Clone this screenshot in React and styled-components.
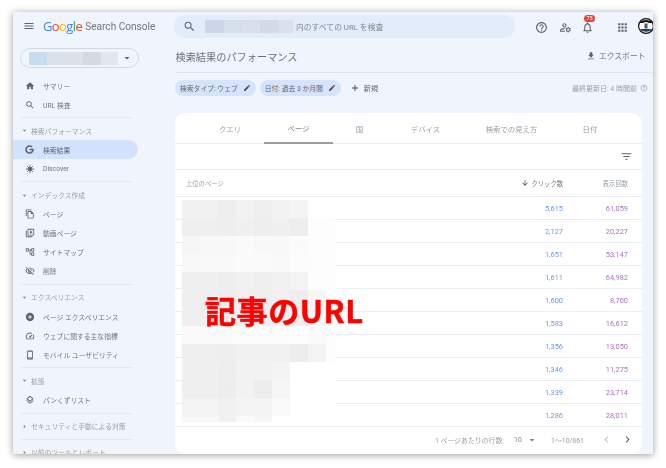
import React from "react";
import styled, { createGlobalStyle } from "styled-components";
import {
  MdMenu,
  MdSearch,
  MdHelpOutline,
  MdOutlineManageAccounts,
  MdOutlineNotifications,
  MdApps,
  MdFileDownload,
  MdEdit,
  MdAdd,
  MdFilterList,
  MdArrowDownward,
  MdChevronLeft,
  MdChevronRight,
  MdArrowDropDown,
  MdArrowRight,
  MdHome,
  MdOutlineFileCopy,
  MdOutlineVideoLibrary,
  MdOutlineAccountTree,
  MdOutlineVisibilityOff,
  MdAddCircle,
  MdOutlineSpeed,
  MdOutlinePhoneAndroid,
  MdOutlineLayers,
} from "react-icons/md";
import { FaGoogle } from "react-icons/fa";

const FONT = `Roboto, "Noto Sans CJK JP", sans-serif`;

const DiscoverIcon = () => (
  <svg viewBox="0 0 24 24" fill="none" stroke="currentColor" strokeWidth="2.2">
    <circle cx="12" cy="12" r="5" fill="currentColor" stroke="none" />
    <path d="M12 2v20M2 12h20M5 5l14 14M19 5L5 19" />
  </svg>
);

const sections = [
  {
    items: [
      { icon: <MdHome />, label: "サマリー" },
      { icon: <MdSearch />, label: "URL 検査" },
    ],
  },
  {
    title: "検索パフォーマンス",
    items: [
      { icon: <FaGoogle />, label: "検索結果", active: true },
      { icon: <DiscoverIcon />, label: "Discover" },
    ],
  },
  {
    title: "インデックス作成",
    items: [
      { icon: <MdOutlineFileCopy />, label: "ページ" },
      { icon: <MdOutlineVideoLibrary />, label: "動画ページ" },
      { icon: <MdOutlineAccountTree />, label: "サイトマップ" },
      { icon: <MdOutlineVisibilityOff />, label: "削除" },
    ],
  },
  {
    title: "エクスペリエンス",
    items: [
      { icon: <MdAddCircle />, label: "ページ エクスペリエンス" },
      { icon: <MdOutlineSpeed />, label: "ウェブに関する主な指標" },
      { icon: <MdOutlinePhoneAndroid />, label: "モバイル ユーザビリティ" },
    ],
  },
  {
    title: "拡張",
    items: [{ icon: <MdOutlineLayers />, label: "パンくずリスト" }],
  },
  { title: "セキュリティと手動による対策", closed: true, items: [] },
  { title: "以前のツールとレポート", closed: true, items: [] },
];

const tabs = ["クエリ", "ページ", "国", "デバイス", "検索での見え方", "日付"];
const tabWidths = [68, 69, 53, 79, 93, 64];

const rows = [
  ["5,615", "61,059"],
  ["2,127", "20,227"],
  ["1,651", "53,147"],
  ["1,611", "64,982"],
  ["1,600", "8,700"],
  ["1,583", "16,612"],
  ["1,356", "13,050"],
  ["1,346", "11,275"],
  ["1,339", "23,714"],
  ["1,286", "28,011"],
];

// redacted urls, one row of grey levels per 18px of height
const mosaic = [
  ["f1", "f1", "ee", "f2", "ef", "f2", "f4", "ff", "ff"],
  ["ef", "ef", "ee", "f0", "ee", "f0", "ee", "fd", "fd"],
  ["f6", "f8", "f8", "fa", "f8", "f8", "fb", "fd", "fd"],
  ["f8", "f9", "f9", "fb", "fa", "f9", "fc", "fd", "fd"],
  ["ef", "f0", "ee", "f1", "ef", "f1", "f3", "fd", "fd"],
  ["ef", "ef", "ee", "f0", "ef", "f0", "ee", "f6", "fd"],
  ["ef", "ef", "ee", "f0", "ef", "f0", "ee", "f6", "fd"],
  ["fa", "fa", "fb", "fc", "fc", "fc", "fd", "fa", "fd"],
  ["ef", "ef", "ee", "f1", "f1", "f1", "ed", "f3", "fd"],
  ["f0", "f0", "ee", "f2", "f2", "f4", "ff", "ff", "ff"],
  ["ef", "ef", "ed", "f2", "ed", "f6", "ff", "ff", "ff"],
  ["f3", "f3", "f1", "f4", "f4", "fa", "ff", "ff", "ff"],
  ["f8", "f8", "f1", "fa", "f6", "fe", "ff", "ff", "ff"],
];

const App = () => {
  return (
    <>
      <GlobalStyle />
      <Page>
        <Window>
          <TopBar>
            <Brand>
              <MenuButton>
                <MdMenu />
              </MenuButton>
              <Logo>
                <Letter $c="#4285f4">G</Letter>
                <Letter $c="#ea4335">o</Letter>
                <Letter $c="#fbbc05">o</Letter>
                <Letter $c="#4285f4">g</Letter>
                <Letter $c="#34a853">l</Letter>
                <Letter $c="#ea4335">e</Letter>
              </Logo>
              <Product>Search Console</Product>
            </Brand>
            <SearchBar>
              <SearchIcon>
                <MdSearch />
              </SearchIcon>
              <Redacted $w={88} $h={13}>
                <Swatch $c="#ccd6e6" $w={19} />
                <Swatch $c="#d6deea" $w={18} />
                <Swatch $c="#d9e0ec" $w={18} />
                <Swatch $c="#d3dbe8" $w={19} />
                <Swatch $c="#dbe2ee" $w={14} />
              </Redacted>
              <SearchText>内のすべての URL を検査</SearchText>
            </SearchBar>
            <TopIcons>
              <TopIcon $left={1}>
                <MdHelpOutline />
              </TopIcon>
              <TopIcon $left={25}>
                <MdOutlineManageAccounts />
              </TopIcon>
              <TopIcon $left={47}>
                <MdOutlineNotifications />
                <Badge>75</Badge>
              </TopIcon>
              <TopIcon $left={82}>
                <MdApps />
              </TopIcon>
              <Avatar viewBox="0 0 16 16">
                <circle cx="8" cy="8" r="7.4" fill="#fff" stroke="#111" strokeWidth="1.2" />
                <path d="M1.5 5 C4 1 12 1 14.5 5 L11 5 C9 3.5 7 3.5 5 5 Z" fill="#111" />
                <path d="M2 11 H14 C12.5 14.5 3.5 14.5 2 11 Z" fill="#17445f" />
                <rect x="6.5" y="5.5" width="3" height="5" fill="#555" />
              </Avatar>
            </TopIcons>
          </TopBar>

          <Body>
            <Sidebar>
              <PropertyPicker>
                <Redacted $w={89} $h={13}>
                  <Swatch $c="#c9dcef" $w={18} />
                  <Swatch $c="#dbe1ea" $w={18} />
                  <Swatch $c="#dde2ea" $w={18} />
                  <Swatch $c="#d5d9e1" $w={18} />
                  <Swatch $c="#e2e6ee" $w={17} />
                </Redacted>
                <PickerCaret>
                  <MdArrowDropDown />
                </PickerCaret>
              </PropertyPicker>

              {sections.map((section, i) => (
                <Section key={i} $first={i === 0}>
                  {section.title && (
                    <SectionTitle>
                      <Caret>{section.closed ? <MdArrowRight /> : <MdArrowDropDown />}</Caret>
                      {section.title}
                    </SectionTitle>
                  )}
                  {section.items.map((item) => (
                    <NavItem key={item.label} $active={item.active}>
                      <NavIcon $small={item.active}>{item.icon}</NavIcon>
                      <span>{item.label}</span>
                    </NavItem>
                  ))}
                </Section>
              ))}
            </Sidebar>

            <Main>
              <TitleRow>
                <Title>検索結果のパフォーマンス</Title>
                <ExportButton>
                  <MdFileDownload />
                  エクスポート
                </ExportButton>
              </TitleRow>

              <FilterRow>
                <Chip>
                  検索タイプ: ウェブ
                  <MdEdit />
                </Chip>
                <Chip>
                  日付: 過去 3 か月間
                  <MdEdit />
                </Chip>
                <NewButton>
                  <MdAdd />
                  新規
                </NewButton>
                <Updated>
                  最終更新日: 4 時間前
                  <MdHelpOutline />
                </Updated>
              </FilterRow>

              <Card>
                <Tabs>
                  {tabs.map((tab, i) => (
                    <Tab key={tab} $active={i === 1} $w={tabWidths[i]}>
                      {tab}
                    </Tab>
                  ))}
                </Tabs>
                <Tools>
                  <MdFilterList />
                </Tools>
                <TableHead>
                  <HeadLabel>上位のページ</HeadLabel>
                  <ClickHead>
                    <MdArrowDownward />
                    クリック数
                  </ClickHead>
                  <ImprCell $head>表示回数</ImprCell>
                </TableHead>
                {rows.map((row, i) => (
                  <Row key={i}>
                    <ClickCell>{row[0]}</ClickCell>
                    <ImprCell>{row[1]}</ImprCell>
                  </Row>
                ))}
                <Footer>
                  <span>1 ページあたりの行数:</span>
                  <PerPage>
                    10
                    <MdArrowDropDown />
                  </PerPage>
                  <span>1〜10/861</span>
                  <Pager>
                    <MdChevronLeft />
                    <MdChevronRight />
                  </Pager>
                </Footer>

                <Mosaic>
                  {mosaic.flat().map((c, i) => (
                    <Cell key={i} $c={`#${c}${c}${c}`} />
                  ))}
                </Mosaic>
                <Note>記事のURL</Note>
              </Card>
            </Main>
          </Body>
        </Window>
      </Page>
    </>
  );
};

export default App;

const GlobalStyle = createGlobalStyle`
  html, body {
    margin: 0;
    padding: 0;
    background: #ffffff;
  }
  * {
    box-sizing: border-box;
  }
`;

const Page = styled.div`
  width: 666px;
  height: 468px;
  padding: 12px 13px 14px;
  overflow: hidden;
  font-family: ${FONT};
  filter: blur(0.35px);
`;

const Window = styled.div`
  width: 640px;
  height: 442px;
  display: flex;
  flex-direction: column;
  overflow: hidden;
  background: #f0f4fc;
  box-shadow: 0 1px 7px rgba(0, 0, 0, 0.4);
`;

const TopBar = styled.div`
  height: 29px;
  flex: none;
  display: flex;
  align-items: flex-start;
  padding-top: 3px;
`;

const Brand = styled.div`
  width: 161px;
  flex: none;
  height: 22px;
  display: flex;
  align-items: center;
  padding-left: 10px;
`;

const MenuButton = styled.div`
  width: 12px;
  height: 12px;
  margin-right: 8px;
  color: #5f6368;
  display: flex;
  svg {
    width: 12px;
    height: 12px;
  }
`;

const Logo = styled.div`
  font-family: "Open Sans", sans-serif;
  font-size: 13px;
  letter-spacing: -0.6px;
  line-height: 22px;
`;

const Letter = styled.span`
  color: ${(p) => p.$c};
`;

const Product = styled.div`
  margin-left: 3px;
  font-size: 10.1px;
  color: #70757a;
  white-space: nowrap;
`;

const SearchBar = styled.div`
  width: 341px;
  flex: none;
  height: 23px;
  border-radius: 11px;
  background: #e3ecfb;
  display: flex;
  align-items: center;
  padding-left: 9px;
`;

const SearchIcon = styled.div`
  width: 13px;
  height: 13px;
  margin-right: 9px;
  color: #5f6368;
  display: flex;
  svg {
    width: 13px;
    height: 13px;
  }
`;

const Redacted = styled.div`
  width: ${(p) => p.$w}px;
  height: ${(p) => p.$h}px;
  display: flex;
  flex: none;
`;

const Swatch = styled.div`
  width: ${(p) => p.$w}px;
  background: ${(p) => p.$c};
`;

const SearchText = styled.div`
  margin-left: 3px;
  font-size: 7.8px;
  color: #80868b;
`;

const TopIcons = styled.div`
  position: relative;
  flex: 1;
  height: 24px;
`;

const TopIcon = styled.div`
  position: absolute;
  left: ${(p) => p.$left + 19}px;
  top: 4px;
  width: 13px;
  height: 13px;
  color: #5f6368;
  svg {
    width: 13px;
    height: 13px;
  }
`;

const Badge = styled.div`
  position: absolute;
  top: -4px;
  left: 3px;
  width: 11px;
  height: 7px;
  border-radius: 4px;
  background: #ea4335;
  color: #fff;
  font-size: 5.5px;
  line-height: 7px;
  text-align: center;
`;

const Avatar = styled.svg`
  position: absolute;
  right: -1px;
  top: 3px;
  width: 16px;
  height: 16px;
`;

const Body = styled.div`
  flex: 1;
  min-height: 0;
  display: flex;
`;

const Sidebar = styled.div`
  width: 162px;
  flex: none;
  overflow: hidden;
  padding-top: 7px;
`;

const PropertyPicker = styled.div`
  width: 119px;
  height: 20px;
  margin-left: 7px;
  border: 1px solid #d3d7de;
  border-radius: 10px;
  display: flex;
  align-items: center;
  padding-left: 8px;
`;

const PickerCaret = styled.div`
  margin-left: 3px;
  width: 12px;
  height: 12px;
  color: #5f6368;
  svg {
    display: block;
    width: 12px;
    height: 12px;
  }
`;

const Section = styled.div`
  width: 113px;
  padding: ${(p) => (p.$first ? "8px" : "3px")} 0 3px;
  border-bottom: 1px solid #e4e8f0;
  margin-left: 7px;
`;

const SectionTitle = styled.div`
  height: 19.1px;
  display: flex;
  align-items: center;
  font-size: 6.8px;
  color: #9aa0a6;
  white-space: nowrap;
`;

const Caret = styled.span`
  width: 9px;
  height: 9px;
  margin-left: 0;
  margin-right: 2px;
  display: flex;
  color: #80868b;
  svg {
    width: 9px;
    height: 9px;
  }
`;

const NavItem = styled.div`
  height: 19.1px;
  width: 125px;
  margin-left: -7px;
  padding-left: 11px;
  display: flex;
  align-items: center;
  font-size: 6.8px;
  color: #70757a;
  white-space: nowrap;
  background: ${(p) => (p.$active ? "#d3e3fd" : "transparent")};
  border-radius: 0 10px 10px 0;
  ${(p) => p.$active && "color: #5f6368;"}
`;

const NavIcon = styled.span`
  width: 11px;
  height: 11px;
  margin-right: 8px;
  display: flex;
  align-items: center;
  justify-content: center;
  color: #5f6368;
  svg {
    width: ${(p) => (p.$small ? 9 : 10)}px;
    height: ${(p) => (p.$small ? 9 : 10)}px;
  }
`;

const Main = styled.div`
  flex: 1;
  min-width: 0;
  display: flex;
  flex-direction: column;
`;

const TitleRow = styled.div`
  height: 32px;
  flex: none;
  width: 478px;
  margin-left: -0.5px;
  display: flex;
  align-items: center;
  justify-content: space-between;
  border-bottom: 1px solid #e1e5ec;
  padding: 0 7px 0 1px;
`;

const Title = styled.div`
  font-size: 10.2px;
  color: #6c7075;
  margin-top: -1px;
`;

const ExportButton = styled.div`
  display: flex;
  align-items: center;
  font-size: 7.8px;
  color: #70757a;
  margin-top: -2px;
  svg {
    width: 10px;
    height: 10px;
    margin-right: 3px;
    color: #5f6368;
  }
`;

const FilterRow = styled.div`
  height: 40px;
  flex: none;
  display: flex;
  align-items: flex-start;
  padding-top: 7px;
  gap: 4px;
  width: 478px;
  padding-right: 5px;
`;

const Chip = styled.div`
  height: 16px;
  padding: 0 5px 0 5px;
  border-radius: 8px;
  background: #d6e4fb;
  display: flex;
  align-items: center;
  gap: 5px;
  font-size: 6.8px;
  color: #5f6368;
  white-space: nowrap;
  svg {
    width: 8px;
    height: 8px;
    color: #4a4e52;
  }
`;

const NewButton = styled.div`
  height: 16px;
  margin-left: 5px;
  display: flex;
  align-items: center;
  gap: 4px;
  font-size: 7.2px;
  color: #5f6368;
  svg {
    width: 10px;
    height: 10px;
    color: #3c4043;
  }
`;

const Updated = styled.div`
  height: 16px;
  margin-left: auto;
  display: flex;
  align-items: center;
  gap: 3px;
  font-size: 7px;
  color: #9aa0a6;
  svg {
    width: 8px;
    height: 8px;
  }
`;

const Card = styled.div`
  position: relative;
  width: 467px;
  flex: 1;
  background: #ffffff;
  border-radius: 10px;
  overflow: hidden;
`;

const Tabs = styled.div`
  height: 31px;
  display: flex;
  padding-left: 21px;
  border-bottom: 1px solid #ebedf0;
`;

const Tab = styled.div`
  width: ${(p) => p.$w}px;
  display: flex;
  align-items: center;
  justify-content: center;
  font-size: 7.4px;
  color: #9aa0a6;
  ${(p) => p.$active && "border-bottom: 2px solid #9a9ea3; margin-bottom: -1px; color: #80868b;"}
`;

const Tools = styled.div`
  height: 25px;
  display: flex;
  align-items: center;
  justify-content: flex-end;
  padding-right: 9px;
  color: #5f6368;
  svg {
    width: 13px;
    height: 13px;
  }
`;

const TableHead = styled.div`
  height: 27px;
  display: flex;
  align-items: center;
  border-top: 1px solid #ebedf0;
  padding-right: 14px;
  font-size: 6.3px;
  color: #9aa0a6;
`;

const HeadLabel = styled.div`
  margin-left: 11px;
  flex: 1;
`;

const ClickHead = styled.div`
  width: 65px;
  display: flex;
  align-items: center;
  justify-content: flex-end;
  color: #70757a;
  svg {
    width: 8px;
    height: 8px;
    margin-right: 3px;
    color: #3c4043;
  }
`;

const Row = styled.div`
  height: 23px;
  display: flex;
  align-items: center;
  justify-content: flex-end;
  border-top: 1px solid #ebedf0;
  padding-right: 14px;
  font-size: 7.4px;
`;

const ClickCell = styled.div`
  color: #6b9be6;
`;

const ImprCell = styled.div`
  width: 65px;
  text-align: right;
  color: ${(p) => (p.$head ? "#9aa0a6" : "#a873c4")};
`;

const Footer = styled.div`
  height: 26px;
  display: flex;
  align-items: center;
  justify-content: flex-end;
  border-top: 1px solid #ebedf0;
  padding-right: 8px;
  font-size: 6.9px;
  color: #9aa0a6;
`;

const PerPage = styled.div`
  width: 37px;
  margin-left: 10px;
  display: flex;
  align-items: center;
  color: #80868b;
  svg {
    width: 12px;
    height: 12px;
    margin-left: 4px;
  }
`;

const Pager = styled.div`
  width: 34px;
  margin-left: 16px;
  display: flex;
  justify-content: space-between;
  color: #5f6368;
  svg {
    width: 13px;
    height: 13px;
  }
  svg:first-child {
    color: #c4c7cc;
  }
`;

const Mosaic = styled.div`
  position: absolute;
  left: 7px;
  top: 87px;
  display: grid;
  grid-template-columns: repeat(8, 18px) 9px;
  grid-template-rows: repeat(12, 18px) 6px;
`;

const Cell = styled.div`
  background: ${(p) => p.$c};
`;

const Note = styled.div`
  position: absolute;
  left: 30px;
  top: 179px;
  font-family: "Noto Sans CJK JP", sans-serif;
  font-size: 31px;
  line-height: 36px;
  font-weight: 700;
  letter-spacing: 0.6px;
  -webkit-text-stroke: 0.5px #ff0000;
  color: #ff0000;
  white-space: nowrap;
`;
